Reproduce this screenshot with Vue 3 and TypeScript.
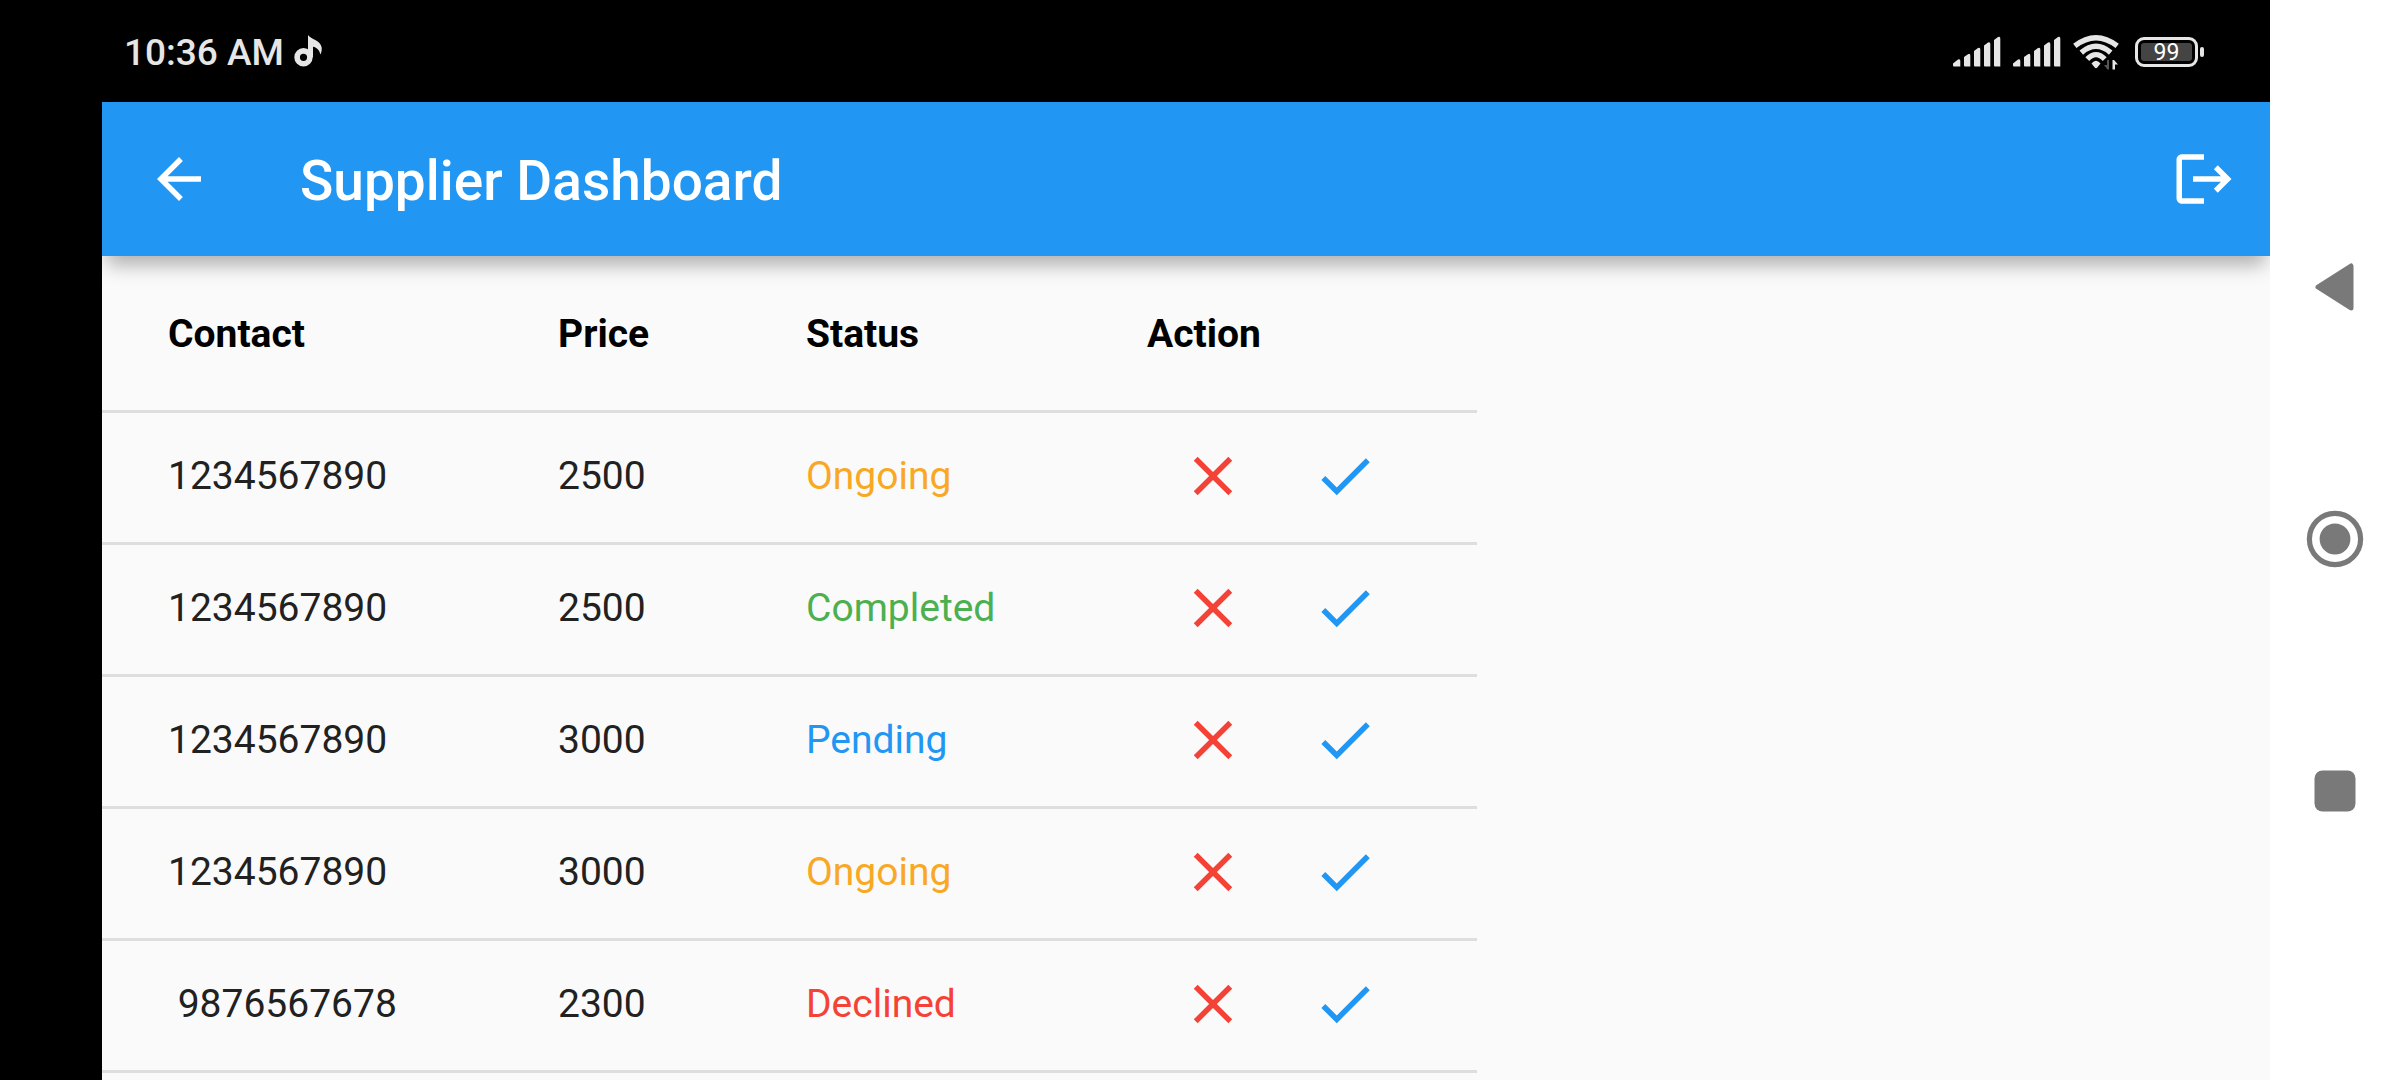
<script setup lang="ts">
type Status = 'Ongoing' | 'Completed' | 'Pending' | 'Declined'

interface Order {
  id: number
  contact: string
  price: string
  status: Status
}

const orders: Order[] = [
  { id: 1, contact: '1234567890', price: '2500', status: 'Ongoing' },
  { id: 2, contact: '1234567890', price: '2500', status: 'Completed' },
  { id: 3, contact: '1234567890', price: '3000', status: 'Pending' },
  { id: 4, contact: '1234567890', price: '3000', status: 'Ongoing' },
  { id: 5, contact: ' 9876567678 ', price: '2300', status: 'Declined' },
]
</script>

<template>
  <div class="device">
    <div class="screen">
      <div class="status-bar">
        <span class="clock">10:36 AM</span>
        <svg class="note" width="28" height="32" viewBox="0 0 28 32" aria-hidden="true">
          <circle cx="9.5" cy="22.3" r="6.4" fill="none" stroke="currentColor" stroke-width="5.6" />
          <path d="M14 0C17 4.500 26 5 27.600 12C28 15 27.500 17.500 26.300 19.600C25.800 15.500 23 12.500 19 11.800V22.300H14Z" fill="currentColor" />
        </svg>
        <div class="indicators">
          <svg v-for="n in 2" :key="n" class="signal" width="48" height="32" viewBox="0 0 48 32" aria-hidden="true">
            <path
              d="M0 27.500L5 23.500Q7.300 22.500 7.300 25V30.500H1Q0 30.500 0 29.500ZM11 21L15 18.200Q17.300 17 17.300 19.500V30.500H12Q11 30.500 11 29.500ZM21 15L25 12Q27.300 11 27.300 13.500V30.500H22Q21 30.500 21 29.500ZM31 9.500L35 6.500Q37.300 5.500 37.300 8V30.500H32Q31 30.500 31 29.500ZM41 4L45 1Q47.300 -.2 47.300 2.500V30.500H42Q41 30.500 41 29.500Z"
              fill="currentColor"
            />
          </svg>
          <svg class="wifi" width="46" height="36" viewBox="0 0 46 36" aria-hidden="true">
            <g fill="none" stroke="currentColor" stroke-width="5.400">
              <path d="M1.800 11.800Q23 -4.500 44.200 11.800" />
              <path d="M8.300 18.600Q23 6 37.700 18.600" />
              <path d="M14.300 25.200Q23 16 31.700 25.200" />
            </g>
            <path d="M18.500 29.500Q23 24 27.500 29.500L24.300 33.500Q23 34.800 21.700 33.500Z" fill="currentColor" />
            <path d="M36 26V35.500H34.500L31 31H34V26Z" fill="#555" />
            <path d="M39.500 35.500V26H41L45 30.500H42V35.500Z" fill="currentColor" />
          </svg>
          <div class="battery">
            <span class="battery-level">99</span>
          </div>
        </div>
      </div>

      <header class="app-bar">
        <button class="icon-button" type="button" aria-label="Back">
          <svg class="icon" viewBox="0 0 24 24"><path d="M20 11H7.830l5.590-5.590L12 4l-8 8 8 8 1.410-1.410L7.830 13H20v-2z" /></svg>
        </button>
        <h1 class="title">Supplier Dashboard</h1>
        <button class="icon-button" type="button" aria-label="Log out">
          <svg class="icon" viewBox="0 0 24 24"><path d="M17 7l-1.410 1.410L18.170 11H8v2h10.170l-2.580 2.580L17 17l5-5zM4 5h8V3H4c-1.100 0-2 .9-2 2v14c0 1.100.9 2 2 2h8v-2H4V5z" /></svg>
        </button>
      </header>

      <main class="content">
        <table class="orders">
          <colgroup>
            <col class="col-contact" />
            <col class="col-price" />
            <col class="col-status" />
            <col class="col-action" />
          </colgroup>
          <thead>
            <tr>
              <th scope="col">Contact</th>
              <th scope="col">Price</th>
              <th scope="col">Status</th>
              <th scope="col">Action</th>
            </tr>
          </thead>
          <tbody>
            <tr v-for="order in orders" :key="order.id">
              <td>{{ order.contact }}</td>
              <td>{{ order.price }}</td>
              <td :class="order.status.toLowerCase()">{{ order.status }}</td>
              <td>
                <div class="actions">
                  <button class="icon-button decline" type="button" aria-label="Decline">
                    <svg class="icon" viewBox="0 0 24 24"><path d="M19 6.410L17.590 5 12 10.590 6.410 5 5 6.410 10.590 12 5 17.590 6.410 19 12 13.410 17.590 19 19 17.590 13.410 12z" /></svg>
                  </button>
                  <button class="icon-button accept" type="button" aria-label="Accept">
                    <svg class="icon" viewBox="0 0 24 24"><path d="M9 16.170L4.830 12l-1.420 1.410L9 19 21 7l-1.410-1.410z" /></svg>
                  </button>
                </div>
              </td>
            </tr>
            <tr class="row-next" aria-hidden="true">
              <td colspan="4"></td>
            </tr>
          </tbody>
        </table>
      </main>
    </div>

    <nav class="system-nav" aria-label="System">
      <button type="button" aria-label="Back">
        <svg width="64" height="64" viewBox="0 0 64 64"><path d="M15 32L48 11V53Z" stroke="currentColor" stroke-width="5" stroke-linejoin="round" /></svg>
      </button>
      <button type="button" aria-label="Home">
        <svg width="64" height="64" viewBox="0 0 64 64">
          <circle cx="32" cy="32" r="25.600" fill="none" stroke="currentColor" stroke-width="5.200" />
          <circle cx="32" cy="32" r="15.400" />
        </svg>
      </button>
      <button type="button" aria-label="Recent apps">
        <svg width="64" height="64" viewBox="0 0 64 64"><rect x="11.500" y="11.500" width="41" height="41" rx="8" /></svg>
      </button>
    </nav>
  </div>
</template>

<style>
body {
  margin: 0;
  overflow: hidden;
}
</style>

<style scoped>
.device {
  display: flex;
  height: 100vh;
  overflow: hidden;
  background: #000;
  font-family: Roboto, "Liberation Sans", sans-serif;
}

button {
  display: flex;
  align-items: center;
  justify-content: center;
  padding: 0;
  border: 0;
  background: none;
  color: inherit;
  cursor: pointer;
}

svg {
  display: block;
}

.screen {
  display: flex;
  flex: 1;
  flex-direction: column;
  min-width: 0;
  padding-left: 102px;
}

.status-bar {
  display: flex;
  align-items: center;
  flex: none;
  height: 102px;
  padding: 0 72px 0 22px;
  color: #e6e6e6;
}

.clock {
  padding-top: 3px;
  font-size: 37px;
  font-weight: 500;
  line-height: 44px;
}

.note {
  margin-left: 10px;
}

.indicators {
  display: flex;
  align-items: center;
  gap: 12px;
  margin-left: auto;
  padding-top: 2px;
}

.battery {
  position: relative;
  box-sizing: border-box;
  width: 63px;
  height: 30px;
  margin-left: 4px;
  padding: 3px;
  border: 3px solid currentColor;
  border-radius: 9px;
}

.battery::after {
  content: "";
  position: absolute;
  top: 7px;
  right: -9px;
  width: 4px;
  height: 10px;
  border-radius: 2px;
  background: currentColor;
}

.battery-level {
  display: block;
  height: 18px;
  border-radius: 3px;
  background: #444;
  color: #fff;
  font-size: 23px;
  font-weight: 400;
  line-height: 20px;
  text-align: center;
}

.app-bar {
  position: relative;
  z-index: 1;
  display: flex;
  align-items: center;
  flex: none;
  height: 154px;
  padding-left: 11px;
  background: #2196f3;
  box-shadow: 0 14px 18px -5px rgba(0, 0, 0, 0.3);
  color: #fff;
}

.title {
  flex: 1;
  margin: 0;
  padding: 3px 0 0 55px;
  font-size: 55px;
  font-weight: 500;
  line-height: 64px;
}

.icon-button {
  flex: none;
  width: 132px;
  height: 126px;
}

.icon {
  width: 66px;
  height: 66px;
  fill: currentColor;
}

.content {
  flex: 1;
  min-height: 0;
  overflow: hidden;
  background: #fafafa;
}

.orders {
  table-layout: fixed;
  width: 1375px;
  border-collapse: separate;
  border-spacing: 0;
  color: #212121;
  font-size: 39px;
  line-height: 44px;
}

.col-contact {
  width: 456px;
}

.col-price {
  width: 248px;
}

.col-status {
  width: 341px;
}

.col-action {
  width: 330px;
}

th,
td {
  padding: 0;
  text-align: left;
  white-space: pre;
}

th {
  height: 152px;
  padding-top: 2px;
  color: #000;
  font-weight: 700;
}

td {
  height: 126px;
  padding-bottom: 3px;
  border-top: 3px solid #dedede;
}

th:first-child,
td:first-child {
  padding-left: 66px;
}

.ongoing {
  color: #f9a825;
}

.completed {
  color: #4caf50;
}

.pending {
  color: #2196f3;
}

.declined,
.decline {
  color: #f44336;
}

.accept {
  color: #2196f3;
}

.actions {
  display: flex;
}

.system-nav {
  position: relative;
  z-index: 2;
  display: flex;
  flex: none;
  flex-direction: column;
  align-items: center;
  justify-content: center;
  gap: 188px;
  box-sizing: border-box;
  width: 130px;
  padding-bottom: 2px;
  background: #fff;
  color: #797979;
}

.system-nav svg {
  fill: currentColor;
}
</style>
